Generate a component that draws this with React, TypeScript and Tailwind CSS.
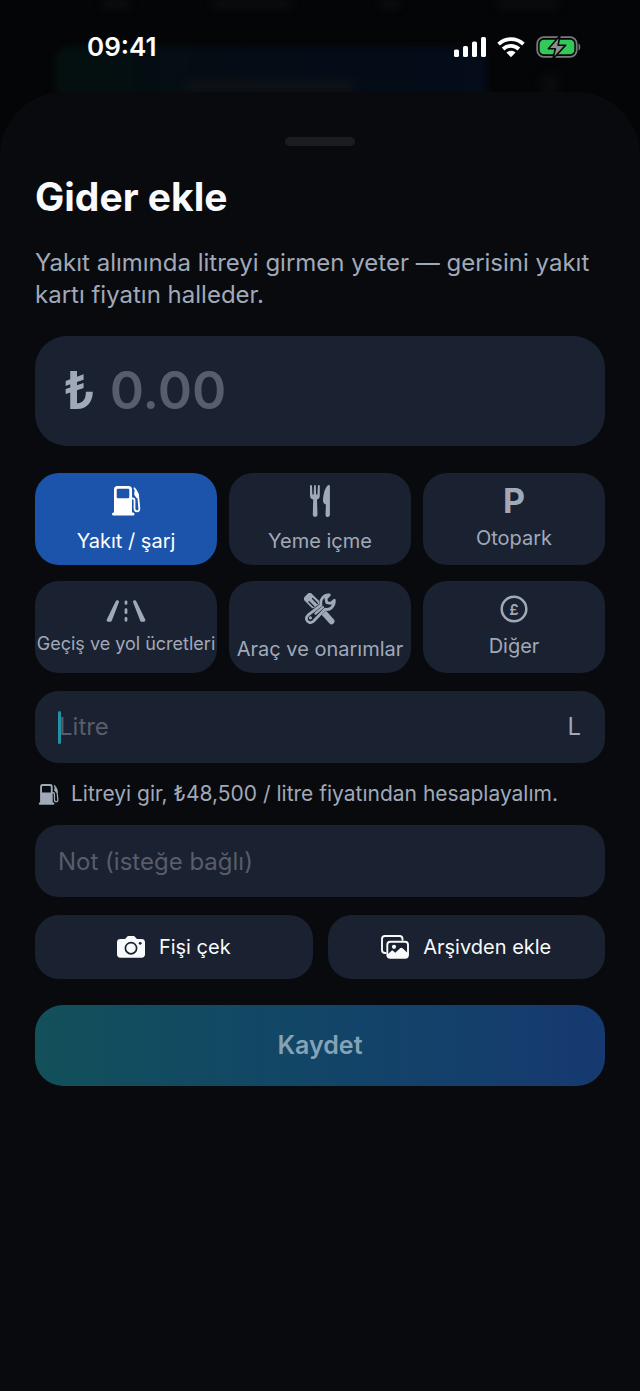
import { useState } from "react"

interface IconProps {
  className?: string
}

const FuelIcon: React.FC<IconProps> = ({ className }) => (
  <svg viewBox="-1 0 30 30" className={className} fill="none" aria-hidden="true">
    <path
      fill="currentColor"
      fillRule="evenodd"
      d="M5.500 0h11a3.500 3.500 0 0 1 3.500 3.500V26.500h1a1.500 1.500 0 0 1 0 3H1.500a1.500 1.500 0 0 1 0-3H2V3.500A3.500 3.500 0 0 1 5.500 0ZM6 2.700a1.300 1.300 0 0 0-1.300 1.300v7a1.300 1.300 0 0 0 1.300 1.300h10a1.300 1.300 0 0 0 1.300-1.300V4a1.300 1.300 0 0 0-1.300-1.300Z"
    />
    <path
      stroke="currentColor"
      strokeWidth="1.800"
      strokeLinecap="round"
      d="M20 12.500h.8c1.200 0 1.700.8 1.700 2v7.500c0 2.200.8 3.300 2.500 3.300s2.500-1.200 2.300-3.200L26 8.500 22.500 2.400"
    />
    <path fill="currentColor" d="M22.500 5 24.500 3.500l2.500 6-.2 3.300-2.300-.8-2.300-3.200Z" />
  </svg>
)

const CutleryIcon: React.FC<IconProps> = ({ className }) => (
  <svg viewBox="0 0 20 32" className={className} fill="currentColor" aria-hidden="true">
    <path d="M0 1.200C0 .4.500.1 1 .1s.9.400 1 1.100l.4 8.300h1.300L4 1c0-.6.400-1 .9-1s.9.400.9 1l.3 8.500h1.300L7.800 1.200C7.900.5 8.300.1 8.800.1s1 .3 1 1.100v9.300c0 2.200-1 3.500-2.800 4.100l.5 15c0 1.300-.9 2.300-2.300 2.300s-2.500-1-2.400-2.300l.4-15C1.100 14 0 12.700 0 10.500Z" />
    <path d="M18.800 0c.7 0 1.100.5 1.100 1.200v28.600c0 1.300-.9 2.200-2.200 2.200s-2.300-1-2.200-2.300l.4-10.200c-2-.7-3-1.900-2.900-4 .2-6.500 2-12.700 5-15.200.3-.2.500-.3.800-.3Z" />
  </svg>
)

const RoadIcon: React.FC<IconProps> = ({ className }) => (
  <svg viewBox="0 0 40 22" className={className} stroke="currentColor" strokeLinecap="round" fill="none" aria-hidden="true">
    <path fill="currentColor" stroke="none" d="M9.600 1.600C10 .6 10.600.2 11.400.2c1.200 0 1.900.9 1.500 2L6 20.200c-.4 1-1.100 1.500-2.300 1.500H2.300c-1.400 0-2-1-1.500-2.200ZM30.400 1.600C30 .6 29.400.2 28.600.2c-1.200 0-1.900.9-1.500 2l6.900 18c.4 1 1.100 1.500 2.300 1.500h1.400c1.400 0 2-1 1.500-2.200Z" />
    <path strokeWidth="2.800" d="M20 1.800v1.600M20 9.700v3M20 18.500v1.800" />
  </svg>
)

const ToolsIcon: React.FC<IconProps> = ({ className }) => (
  <svg viewBox="0 0 32 32" className={className} fill="none" aria-hidden="true">
    {/* screwdriver */}
    <rect x="-5" y="-7.500" width="10" height="15.500" rx="3.200" transform="translate(7.500 7.500) rotate(-45)" fill="currentColor" />
    <path d="M11 11.500 21 21.500" stroke="currentColor" strokeWidth="5" />
    <path d="m21 21 6.500 7.200" stroke="currentColor" strokeWidth="6" strokeLinecap="round" />
    <path d="m5 8.700 4.800 4.800M8.500 5.500l4.800 4.800" className="stroke-[#1a2130]" strokeWidth="1.400" strokeLinecap="round" />
    {/* wrench */}
    <path
      className="fill-[#1a2130] stroke-[#1a2130]"
      strokeWidth="5"
      strokeLinejoin="round"
      d="M17.600 12.200c-.9-4.500 2.100-8.400 5.400-8.700l.2 3.900 2.700 2.500 3.200-.4c0 3.500-3.900 6.700-8.300 5.700L8.800 27.200c-2.100 1.800-4.700.3-5.200-1.800-.3-1.300.2-2.400 1.200-3.200Z"
    />
    <path
      className="fill-[#1a2130]"
      stroke="currentColor"
      strokeWidth="2.800"
      strokeLinejoin="round"
      d="M17 12.100c-1.300-5.600 2.600-10.400 8.300-10.100l-3.300 3.600.7 4 4.200.8 3.400-3.100c.6 5.600-4 10.300-9.300 8.900L9.200 28.500c-2.500 2.200-6 .8-6.700-2-.4-1.600.2-3.200 1.500-4.300Z"
    />
    <path d="m11.500 20.500 7.500-6.300" stroke="currentColor" strokeWidth="2.400" strokeLinecap="round" />
    <circle cx="6.400" cy="24.800" r="1.600" fill="currentColor" />
  </svg>
)

const PoundIcon: React.FC<IconProps> = ({ className }) => (
  <svg viewBox="0 0 28 28" className={className} fill="none" aria-hidden="true">
    <circle cx="14" cy="14" r="12.300" stroke="currentColor" strokeWidth="2.500" />
    <text x="14" y="19.500" textAnchor="middle" fontSize="15" fontWeight="600" fill="currentColor">£</text>
  </svg>
)

const CameraIcon: React.FC<IconProps> = ({ className }) => (
  <svg viewBox="0 0 28 22" className={className} fill="none" aria-hidden="true">
    <path fill="currentColor" d="M3.500 3h4c.6 0 1-.3 1.400-.8l.7-.9C10.200.5 10.900.1 12 .1h4c1.100 0 1.800.4 2.400 1.200l.7.900c.4.500.8.8 1.400.8h4C26.800 3 28 4.200 28 6.400v11.900c0 2.300-1.200 3.500-3.500 3.500h-21C1.200 21.800 0 20.600 0 18.300V6.400C0 4.200 1.200 3 3.500 3Z" />
    <circle cx="14" cy="12.200" r="5.600" className="stroke-[#1a2130]" strokeWidth="1.700" />
    <circle cx="23.200" cy="7.300" r="1.400" className="fill-[#1a2130]" />
  </svg>
)

const PhotosIcon: React.FC<IconProps> = ({ className }) => (
  <svg viewBox="0 0 28 24" className={className} fill="none" aria-hidden="true">
    <path stroke="currentColor" strokeWidth="1.900" strokeLinecap="round" d="M4.500 18H4c-2 0-3-1-3-3V4c0-2 1-3 3-3h14.500c2 0 3 1 3 3v.8" />
    <rect x="6.300" y="6.800" width="20.700" height="16" rx="3" stroke="currentColor" strokeWidth="1.900" />
    <circle cx="13" cy="11.800" r="2.100" fill="currentColor" />
    <path fill="currentColor" d="M6.500 19.500 10.300 16c.7-.6 1.400-.6 2 0l1.900 1.700 4.900-4.500c.8-.7 1.600-.7 2.400 0l5.500 5.100v2.200c0 1.500-.8 2.300-2.500 2.300H9c-1.700 0-2.500-.8-2.500-2.300Z" />
  </svg>
)

const StatusIcons = () => (
  <div className="flex items-center gap-[11px]">
    <svg viewBox="0 0 32 20" className="h-5 w-8 fill-white" aria-hidden="true">
      <rect x="0" y="12.500" width="5" height="7.500" rx="1.600" />
      <rect x="9" y="9" width="5" height="11" rx="1.600" />
      <rect x="18" y="4.600" width="5" height="15.400" rx="1.600" />
      <rect x="27" y="0" width="5" height="20" rx="1.600" />
    </svg>
    <svg viewBox="0 0 28 20" className="h-5 w-7" fill="none" stroke="#fff" strokeWidth="3.800" aria-hidden="true">
      <path d="M1.600 7.200c7-6.700 17.800-6.700 24.800 0" />
      <path d="M6.100 12c4.600-4.300 11.200-4.300 15.800 0" />
      <path fill="#fff" stroke="none" d="M14 20.200 9.400 15.600c2.700-2.400 6.500-2.400 9.200 0Z" />
    </svg>
    <svg viewBox="0 0 46 22" className="h-[22px] w-[46px]" fill="none" aria-hidden="true">
      <rect x="1.200" y="1.200" width="39.500" height="19.600" rx="6.500" stroke="#77797c" strokeWidth="1.800" />
      <path fill="#77797c" d="M42.600 7.500c2.200.8 2.200 6.200 0 7Z" />
      <rect x="3.600" y="3.700" width="34.700" height="14.600" rx="4.300" fill="#34c759" />
      <path fill="#8b8d8e" stroke="#050607" strokeWidth="1.600" strokeLinejoin="round" d="M24-.5 12.400 12.700h6.900L17 22.800 29.600 9.200h-7.500Z" />
    </svg>
  </div>
)

const categories = [
  { id: "fuel", label: "Yakıt / şarj", icon: <FuelIcon className="size-[30px]" />, box: "h-[34px]" },
  { id: "food", label: "Yeme içme", icon: <CutleryIcon className="h-8 w-5" />, box: "h-[34px]" },
  { id: "parking", label: "Otopark", icon: <span className="text-[34px] leading-7 font-bold">P</span>, box: "h-7" },
  { id: "toll", label: "Geçiş ve yol ücretleri", icon: <RoadIcon className="h-[22px] w-10" />, box: "h-6", small: true },
  { id: "repair", label: "Araç ve onarımlar", icon: <ToolsIcon className="size-8" />, box: "h-[34px]" },
  { id: "other", label: "Diğer", icon: <PoundIcon className="size-7" />, box: "h-7" },
]

const Backdrop = () => (
  <div className="absolute inset-x-0 top-0 h-[92px] overflow-hidden" aria-hidden="true">
    <div className="absolute top-[46px] right-[153px] left-[55px] h-16 rounded-2xl bg-linear-to-r from-[#04100f] via-[#040c16] to-[#050c1a] blur-[3px]" />
    <div className="absolute top-[80px] left-[186px] h-3 w-[168px] rounded bg-[#0f1316] blur-[4px]" />
    <div className="absolute top-0 left-[102px] h-2 w-7 rounded bg-[#0e0f11] blur-[4px]" />
    <div className="absolute top-0 left-[212px] h-2 w-20 rounded bg-[#0e0f11] blur-[4px]" />
    <div className="absolute top-0 left-[380px] h-2 w-5 rounded bg-[#0e0f11] blur-[4px]" />
    <div className="absolute top-0 right-[82px] h-2 w-[60px] rounded bg-[#0e0f11] blur-[4px]" />
    <div className="absolute top-[74px] right-[80px] size-5 rounded-full bg-[#0b0c0e] blur-[4px]" />
  </div>
)

export default function App() {
  const [category, setCategory] = useState("fuel")
  const [amount, setAmount] = useState("")
  const [litres, setLitres] = useState("")
  const [note, setNote] = useState("")

  return (
    <div className="relative flex min-h-screen flex-col bg-[#040506] font-['Inter','Liberation_Sans',sans-serif] text-[#a0a9b8]">
      <Backdrop />
      <header className="relative flex h-[92px] items-center justify-between pt-[2px] pr-[58px] pl-[87px]">
        <time className="text-[26px] leading-8 font-semibold text-white">09:41</time>
        <StatusIcons />
      </header>

      <main className="relative grow rounded-t-[64px] bg-[#080a0e] px-[35px] pt-[45px] pb-10">
        <div className="mx-auto h-[9px] w-[70px] rounded-full bg-[#1b1c20]" />
        <h1 className="mt-[27px] text-[39px] leading-12 font-bold text-[#f8fafc]">Gider ekle</h1>
        <p className="mt-[26px] text-[24px] leading-8">
          Yakıt alımında litreyi girmen yeter — gerisini yakıt kartı fiyatın halleder.
        </p>

        <label className="mt-[25px] flex h-[110px] items-center gap-[14px] rounded-[32px] bg-[#1a2130] px-7 font-semibold">
          <span className="text-[52px]">₺</span>
          <input
            value={amount}
            onChange={(e) => setAmount(e.target.value)}
            inputMode="decimal"
            placeholder="0.00"
            aria-label="Tutar"
            className="w-full min-w-0 bg-transparent text-[52px] outline-none placeholder:text-[#575d6a]"
          />
        </label>

        <div className="mt-[27px] grid grid-cols-3 gap-x-3 gap-y-4">
          {categories.map((item) => (
            <button
              key={item.id}
              type="button"
              aria-pressed={category === item.id}
              onClick={() => setCategory(item.id)}
              className={`
                flex h-[92px] flex-col items-center justify-center gap-[10px] rounded-3xl whitespace-nowrap
                ${category === item.id ? 'bg-[#1c54ab] text-white' : 'bg-[#1a2130]'}`}>
              <span className={`flex items-center justify-center ${item.box}`}>{item.icon}</span>
              <span className={item.small ? 'text-[18px] leading-[22px]' : 'text-[20px] leading-[26px]'}>
                {item.label}
              </span>
            </button>
          ))}
        </div>

        <label className="relative mt-[18px] flex h-[72px] items-center rounded-3xl bg-[#1a2130] px-6 text-[24px]">
          {litres === "" && <span className="absolute left-[23px] h-[33px] w-[3px] rounded-full bg-[#2391a5]" />}
          <input
            value={litres}
            onChange={(e) => setLitres(e.target.value)}
            inputMode="decimal"
            placeholder="Litre"
            className="w-full min-w-0 bg-transparent outline-none placeholder:text-[#575d6a]"
          />
          <span>L</span>
        </label>

        <p className="my-[15px] flex h-8 items-center gap-3 pl-[3px] text-[21px] whitespace-nowrap">
          <FuelIcon className="size-[21px] shrink-0" />
          Litreyi gir, ₺48,500 / litre fiyatından hesaplayalım.
        </p>

        <input
          value={note}
          onChange={(e) => setNote(e.target.value)}
          placeholder="Not (isteğe bağlı)"
          aria-label="Not"
          className="block h-[72px] w-full rounded-3xl bg-[#1a2130] px-[23px] text-[24px] outline-none placeholder:text-[#575d6a]"
        />

        <div className="mt-[18px] grid grid-cols-2 gap-[15px] text-[20px] text-[#f8fafc]">
          <button type="button" className="flex h-16 items-center justify-center gap-[14px] rounded-3xl bg-[#1a2130]">
            <CameraIcon className="h-[22px] w-7" />
            Fişi çek
          </button>
          <button type="button" className="flex h-16 items-center justify-center gap-[14px] rounded-3xl bg-[#1a2130]">
            <PhotosIcon className="h-6 w-7" />
            Arşivden ekle
          </button>
        </div>

        <button
          type="button"
          className="mt-[26px] h-[81px] w-full rounded-[28px] bg-linear-to-r from-[#12505a] via-[#124567] to-[#163970] text-[25px] font-semibold text-[#86a2b4]">
          Kaydet
        </button>
      </main>
    </div>
  )
}
